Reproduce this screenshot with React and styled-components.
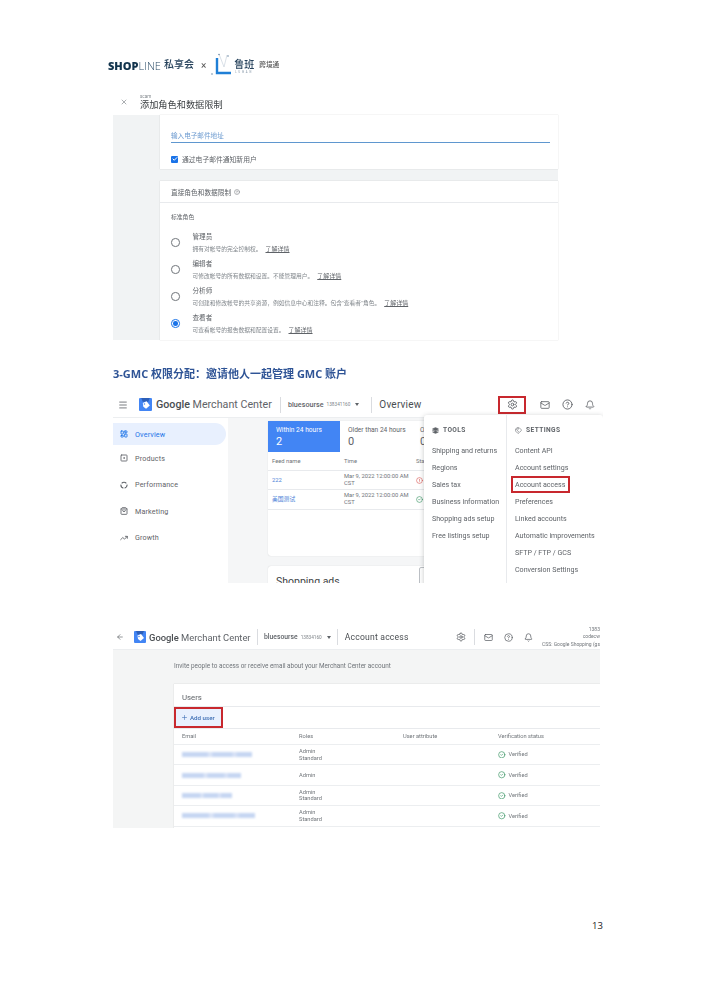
import React from 'react';
import styled, { createGlobalStyle } from 'styled-components';
import {
  Menu, ArrowLeft, Settings, Mail, CircleHelp, Bell, X, Check,
  LayoutDashboard, SquareDot, ShoppingBag, TrendingUp,
  Tags, Layers, CircleCheck, CircleAlert, Plus
} from 'lucide-react';

const GlobalStyle = createGlobalStyle`
  html, body {
    margin: 0;
    padding: 0;
    background: #fff;
  }
  * { box-sizing: border-box; }
`;

const CJK = `Roboto, "Noto Sans CJK SC", sans-serif`;

const Page = styled.div`
  width: 710px;
  height: 1004px;
  overflow: hidden;
  padding-top: 52px;
  font-family: ${CJK};
  color: #3c4043;
`;

const Soft = styled.div`
  filter: blur(0.4px);
`;

/* brand row */
const BrandRow = styled(Soft)`
  height: 26px;
  margin-left: 108px;
  display: flex;
  align-items: center;
  color: #1d3a54;
`;
const Shop = styled.span`
  font-size: 11px;
  font-weight: 800;
  font-family: "Open Sans", sans-serif;
  color: #12344d;
`;
const Line = styled.span`
  font-size: 11px;
  font-weight: 300;
  color: #2c4d68;
  font-family: "Open Sans", sans-serif;
`;
const BrandCn = styled.span`
  margin-left: ${p => p.$ml || 3}px;
  font-size: ${p => p.$size || 10}px;
  line-height: ${p => p.$size || 10}px;
  font-weight: ${p => p.$weight || 500};
  color: ${p => p.$color || '#24405a'};
  white-space: nowrap;
`;
const Times = styled.span`
  margin-left: 7px;
  font-size: 10px;
  color: #555;
`;
const LubanLogo = styled.svg`
  width: 22px;
  height: 24px;
  margin-left: 5px;
  flex: none;
`;
const LubanName = styled.div`
  margin-left: 1px;
  display: flex;
  flex-direction: column;
  align-items: center;
  gap: 1px;
  padding-top: 3px;
`;
const LubanSub = styled.span`
  font-size: 2.6px;
  line-height: 3px;
  letter-spacing: 2px;
  color: #7b8ea0;
`;

/* first screenshot */
const RoleShot = styled(Soft)`
  margin: 10px 0 0 113px;
  width: 445px;
  height: 252px;
`;
const RoleHead = styled.div`
  height: 27px;
  display: flex;
  align-items: center;
  padding-left: 7px;
`;
const HeadTitles = styled.div`
  margin-left: 12px;
  display: flex;
  flex-direction: column;
  padding-top: 1px;
`;
const Scam = styled.span`
  font-size: 4.5px;
  line-height: 5px;
  color: #80868b;
`;
const RoleTitle = styled.span`
  font-size: 9.2px;
  line-height: 12px;
  color: #3c4043;
`;
const RoleBody = styled.div`
  height: 225px;
  padding-left: 47px;
  background: #f1f3f4;
  display: flex;
  flex-direction: column;
  gap: 12px;
`;
const Card = styled.div`
  background: #fff;
  box-shadow: 0 0 1px rgba(60, 64, 67, 0.25);
`;
const InviteCard = styled(Card)`
  height: 54px;
  padding: 15px 8px 0 11px;
`;
const EmailField = styled.div`
  height: 13px;
  font-size: 6.6px;
  line-height: 12px;
  color: #6d9bd0;
  border-bottom: 1px solid #5f97cf;
`;
const CheckRow = styled.div`
  margin-top: 11px;
  display: flex;
  align-items: center;
  gap: 4px;
  font-size: 6.8px;
  color: #5f6368;
`;
const CheckBox = styled.span`
  width: 7px;
  height: 7px;
  border-radius: 1px;
  background: #1a73e8;
  color: #fff;
  display: flex;
  align-items: center;
  justify-content: center;
`;
const RolesCard = styled(Card)`
  flex: 1;
`;
const RolesHead = styled.div`
  height: 22px;
  padding-left: 11px;
  display: flex;
  align-items: center;
  gap: 3px;
  font-size: 6.7px;
  color: #5f6368;
  border-bottom: 1px solid #e8eaed;
`;
const StdLabel = styled.div`
  padding: 10px 0 0 11px;
  height: 26px;
  font-size: 5.8px;
  line-height: 8px;
  color: #5f6368;
`;
const RoleRow = styled.div`
  height: 27px;
  padding-left: 11px;
  display: flex;
  align-items: center;
  gap: 13px;
`;
const Radio = styled.span`
  width: 8.5px;
  height: 8.5px;
  border-radius: 50%;
  border: 1px solid ${p => (p.$on ? '#1a73e8' : '#70757a')};
  display: flex;
  align-items: center;
  justify-content: center;
  flex: none;
  &::after {
    content: '';
    display: ${p => (p.$on ? 'block' : 'none')};
    width: 4.5px;
    height: 4.5px;
    border-radius: 50%;
    background: #1a73e8;
  }
`;
const RoleText = styled.div`
  display: flex;
  flex-direction: column;
  gap: 4px;
`;
const RoleName = styled.span`
  font-size: 6.6px;
  line-height: 8px;
  color: #5f6368;
`;
const RoleDesc = styled.span`
  font-size: 5.75px;
  line-height: 7px;
  color: #80868b;
  white-space: nowrap;
`;
const LearnMore = styled.span`
  margin-left: 4px;
  font-size: 6px;
  text-decoration: underline;
  color: #5f6368;
`;

const Heading = styled.h2`
  margin: 27px 0 0 113px;
  height: 14px;
  font-size: 11px;
  line-height: 14px;
  font-weight: 700;
  color: #2f5496;
  font-family: "Open Sans", "Noto Sans CJK SC", sans-serif;
  white-space: nowrap;
  filter: blur(0.3px);
`;

/* merchant center shared */
const TopBar = styled.div`
  height: ${p => p.$h}px;
  display: flex;
  align-items: center;
  background: #fff;
  border-bottom: 1px solid #eceef0;
  color: #5f6368;
`;
const GmcLogo = styled.svg`
  width: ${p => p.$size}px;
  height: ${p => p.$size}px;
  margin-left: ${p => p.$ml}px;
  flex: none;
`;
const GmcName = styled.span`
  margin-left: ${p => p.$ml}px;
  width: ${p => p.$w}px;
  font-size: ${p => p.$size}px;
  color: #5f6368;
  white-space: nowrap;
  flex: none;
  b {
    font-weight: 500;
    color: #4a4e52;
  }
`;
const VLine = styled.span`
  width: 1px;
  height: 16px;
  background: #dadce0;
  margin-left: ${p => p.$ml}px;
  flex: none;
`;
const Account = styled.span`
  margin-left: ${p => p.$ml}px;
  font-size: ${p => p.$size}px;
  font-weight: 500;
  color: #5f6368;
  white-space: nowrap;
  display: flex;
  align-items: center;
  gap: 3px;
  flex: none;
  small {
    font-size: 4.7px;
    font-weight: 400;
    color: #80868b;
  }
`;
const Caret = styled.span`
  width: 0;
  height: 0;
  margin-left: 2px;
  border-left: 2.5px solid transparent;
  border-right: 2.5px solid transparent;
  border-top: 3px solid #5f6368;
`;
const PageTitle = styled.span`
  margin-left: ${p => p.$ml}px;
  font-size: ${p => p.$size}px;
  letter-spacing: 0.2px;
  color: #4a4e52;
  white-space: nowrap;
  flex: none;
`;
const IconGroup = styled.div`
  margin-left: auto;
  display: flex;
  align-items: center;
  color: #5f6368;
`;
const GearBox = styled.span`
  width: 28px;
  height: 18px;
  border: 2px solid #c8282e;
  display: flex;
  align-items: center;
  justify-content: center;
  margin-right: 14px;
`;
const BarIcon = styled.span`
  display: flex;
  margin-left: ${p => p.$ml || 0}px;
`;

/* overview screenshot */
const OverviewShot = styled(Soft)`
  position: relative;
  margin: 11px 0 0 113px;
  width: 490px;
  height: 191px;
  overflow: hidden;
`;
const OverviewBody = styled.div`
  height: 165px;
  display: flex;
`;
const SideNav = styled.nav`
  width: 115px;
  padding-top: 5px;
  flex: none;
  background: #fff;
`;
const NavItem = styled.div`
  height: ${p => (p.$on ? 22 : 26.5)}px;
  width: 113px;
  display: flex;
  align-items: center;
  gap: 7px;
  padding-left: 7px;
  font-size: 7.2px;
  letter-spacing: 0.15px;
  color: ${p => (p.$on ? '#1a73e8' : '#5f6368')};
  background: ${p => (p.$on ? '#e8f0fe' : 'transparent')};
  border-radius: ${p => (p.$on ? '0 11px 11px 0' : '0')};
`;
const PerfIcon = styled.svg`
  width: 8px;
  height: 8px;
  flex: none;
`;
const MainArea = styled.div`
  flex: 1;
  background: #f5f6f7;
  padding: 3px 0 0 40px;
  display: flex;
  flex-direction: column;
  gap: 10px;
`;
const FeedCard = styled(Card)`
  height: 135px;
  flex: none;
  border-radius: 3px;
`;
const Tabs = styled.div`
  height: 31px;
  display: flex;
`;
const Tab = styled.div`
  width: ${p => p.$w}px;
  padding: 5px 0 0 ${p => p.$pl}px;
  background: ${p => (p.$on ? '#4285f4' : '#fff')};
  color: ${p => (p.$on ? '#fff' : '#5f6368')};
  font-size: 6.6px;
  line-height: 8px;
  white-space: nowrap;
  strong {
    display: block;
    margin-top: 1px;
    font-size: 11px;
    line-height: 14px;
    font-weight: 400;
  }
`;
const FeedRow = styled.div`
  height: ${p => p.$h}px;
  display: grid;
  grid-template-columns: 72px 72px 1fr;
  align-items: center;
  padding-left: 4px;
  font-size: 5.8px;
  line-height: 7px;
  color: #70757a;
  border-bottom: 1px solid #e8eaed;
`;
const FeedLink = styled.span`
  color: #4a7fd8;
`;
const AdsCard = styled(Card)`
  height: 40px;
  padding: 9px 0 0 8px;
  font-size: 10.5px;
  color: #3c4043;
  border-radius: 3px;
  display: flex;
`;
const AdsButton = styled.span`
  margin: -8px 0 0 79px;
  width: 30px;
  height: 30px;
  border: 1px solid #bdc1c6;
  border-radius: 2px;
`;

const Dropdown = styled.div`
  position: absolute;
  left: 311px;
  top: 23px;
  width: 179px;
  height: 175px;
  background: #fff;
  border-radius: 3px;
  box-shadow: 0 1px 5px rgba(60, 64, 67, 0.3);
  display: flex;
`;
const MenuCol = styled.div`
  width: ${p => p.$w}px;
  flex: none;
  padding: 6.5px 0 0 ${p => p.$pl}px;
  border-right: ${p => (p.$rule ? '1px solid #e8eaed' : 'none')};
`;
const MenuHead = styled.div`
  height: 17px;
  margin-bottom: 3px;
  display: flex;
  align-items: center;
  gap: 4px;
  font-size: 6.6px;
  font-weight: 700;
  letter-spacing: 0.4px;
  color: #5f6368;
`;
const MenuLink = styled.div`
  height: 17px;
  display: flex;
  align-items: center;
  font-size: 7.1px;
  color: #5f6368;
  white-space: nowrap;
`;
const MarkedLink = styled(MenuLink)`
  margin-left: -4px;
  width: 59px;
  border: 2px solid #c8282e;
  padding-left: 2px;
`;

/* account access screenshot */
const AccessShot = styled(Soft)`
  margin: 42px 0 0 113px;
  width: 487px;
  height: 203px;
  overflow: hidden;
`;
const UserInfo = styled.div`
  margin-left: 3px;
  width: 64px;
  flex: none;
  font-size: 5px;
  line-height: 7.5px;
  color: #70757a;
  white-space: nowrap;
  display: flex;
  flex-direction: column;
  align-items: flex-end;
`;
const AccessBody = styled.div`
  height: 178px;
  background: #f4f5f5;
  padding-left: 61px;
`;
const InviteText = styled.div`
  height: 34px;
  padding-top: 12px;
  font-size: 6.4px;
  line-height: 8px;
  color: #70757a;
  white-space: nowrap;
`;
const UsersCard = styled(Card)`
  height: 144px;
`;
const UsersHead = styled.div`
  height: 23px;
  padding: 4px 0 0 8px;
  display: flex;
  align-items: center;
  font-size: 7.8px;
  color: #5f6368;
  border-bottom: 1px solid #e8eaed;
`;
const AddRow = styled.div`
  height: 22px;
  border-bottom: 1px solid #e8eaed;
  display: flex;
`;
const AddButton = styled.div`
  width: 49px;
  height: 21px;
  border: 2px solid #c8282e;
  background: #e8f0fe;
  color: #3f6fb5;
  font-size: 6.2px;
  font-weight: 500;
  display: flex;
  align-items: center;
  gap: 2px;
  padding-left: 5px;
`;
const UserRow = styled.div`
  height: ${p => p.$h}px;
  display: grid;
  grid-template-columns: 117px 104px 95px 1fr;
  align-items: center;
  padding-left: 8px;
  font-size: 5.7px;
  line-height: 6.5px;
  color: #70757a;
  border-bottom: 1px solid #eceef0;
`;
const BlurMail = styled.span`
  display: block;
  height: 5px;
  background: linear-gradient(90deg, #c6d6f2 0 35%, #e0e8f8 40%, #c6d6f2 45% 70%, #dbe4f7 75%, #c6d6f2 80%);
  filter: blur(1.3px);
`;
const Verified = styled.span`
  display: flex;
  align-items: center;
  gap: 3px;
  color: #70757a;
  svg { color: #2f8f5b; }
`;

const PageNo = styled.div`
  margin: 92px 0 0 592px;
  font-size: 9.5px;
  line-height: 12px;
  color: #222;
  font-family: "Open Sans", sans-serif;
`;

const GmcIcon = ({ size, ml }) => (
  <GmcLogo $size={size} $ml={ml} viewBox="0 0 24 24">
    <rect width="24" height="24" rx="2" fill="#4285f4" />
    <path d="M4 0h16l-3 7H7z" fill="#2d5fb8" />
    <path d="M7 9l7-3 6 8-7 6-5-4z" fill="#fff" />
    <circle cx="10" cy="11" r="1.5" fill="#4285f4" />
  </GmcLogo>
);

const PerformanceIcon = () => (
  <PerfIcon viewBox="0 0 24 24" fill="none" stroke="currentColor" strokeWidth="3.4">
    <path d="M5 7a9.5 9.5 0 0 1 14 0" />
    <path d="M21 11a9.5 9.5 0 0 1-7 10.5" />
    <path d="M10 21.5A9.5 9.5 0 0 1 3 11" />
  </PerfIcon>
);

const roles = [
  { name: '管理员', desc: '拥有对帐号的完全控制权。' },
  { name: '编辑者', desc: '可修改帐号的所有数据和设置。不能管理用户。' },
  { name: '分析师', desc: '可创建和修改帐号的共享资源，例如信息中心和注释。包含"查看者"角色。' },
  { name: '查看者', desc: '可查看帐号的报告数据和配置设置。', on: true }
];

const navItems = [
  { label: 'Overview', Icon: LayoutDashboard, on: true },
  { label: 'Products', Icon: SquareDot },
  { label: 'Performance', Icon: PerformanceIcon },
  { label: 'Marketing', Icon: ShoppingBag },
  { label: 'Growth', Icon: TrendingUp }
];

const tools = ['Shipping and returns', 'Regions', 'Sales tax', 'Business information', 'Shopping ads setup', 'Free listings setup'];

const users = [
  { width: 70, roles: ['Admin', 'Standard'] },
  { width: 59, roles: ['Admin'] },
  { width: 50, roles: ['Admin', 'Standard'] },
  { width: 73, roles: ['Admin', 'Standard'] }
];

const App = () => (
  <>
    <GlobalStyle />
    <Page>
      <BrandRow>
        <Shop>SHOP</Shop>
        <Line>LINE</Line>
        <BrandCn $ml={3}>私享会</BrandCn>
        <Times>×</Times>
        <LubanLogo viewBox="0 0 22 24">
          <path d="M6 5v15h14" fill="none" stroke="#1f7fd6" strokeWidth="2.4" />
          <path d="M8 1l5 13M16 2l-3 12" stroke="#c9d3dc" strokeWidth="0.7" />
          <circle cx="8" cy="1.5" r="0.8" fill="#6c8aa5" />
          <circle cx="17" cy="3" r="0.8" fill="#6c8aa5" />
          <circle cx="1" cy="21" r="0.8" fill="#6c8aa5" />
        </LubanLogo>
        <LubanName>
          <BrandCn $ml={0.1}>鲁班</BrandCn>
          <LubanSub>LUBAN</LubanSub>
        </LubanName>
        <BrandCn $ml={5} $size={6.6} $color="#555">跨境通</BrandCn>
      </BrandRow>

      <RoleShot>
        <RoleHead>
          <X size={8} color="#80868b" />
          <HeadTitles>
            <Scam>scam</Scam>
            <RoleTitle>添加角色和数据限制</RoleTitle>
          </HeadTitles>
        </RoleHead>
        <RoleBody>
          <InviteCard>
            <EmailField>输入电子邮件地址</EmailField>
            <CheckRow>
              <CheckBox><Check size={6} strokeWidth={4} /></CheckBox>
              通过电子邮件通知新用户
            </CheckRow>
          </InviteCard>
          <RolesCard>
            <RolesHead>
              直接角色和数据限制
              <CircleHelp size={6} color="#70757a" />
            </RolesHead>
            <StdLabel>标准角色</StdLabel>
            {roles.map(role => (
              <RoleRow key={role.name}>
                <Radio $on={role.on} />
                <RoleText>
                  <RoleName>{role.name}</RoleName>
                  <RoleDesc>
                    {role.desc}
                    <LearnMore>了解详情</LearnMore>
                  </RoleDesc>
                </RoleText>
              </RoleRow>
            ))}
          </RolesCard>
        </RoleBody>
      </RoleShot>

      <Heading>3-GMC 权限分配：邀请他人一起管理 GMC 账户</Heading>

      <OverviewShot>
        <TopBar $h={26}>
          <BarIcon $ml={5}><Menu size={10} /></BarIcon>
          <GmcIcon size={13} ml={11} />
          <GmcName $ml={4} $w={120} $size={10.7}><b>Google</b> Merchant Center</GmcName>
          <VLine $ml={4} />
          <Account $ml={7} $size={7.2}>
            bluesourse <small>138341160</small>
            <Caret />
          </Account>
          <VLine $ml={12} />
          <PageTitle $ml={7} $size={10}>Overview</PageTitle>
          <IconGroup>
            <GearBox><Settings size={11} /></GearBox>
            <BarIcon><Mail size={10} /></BarIcon>
            <BarIcon $ml={12}><CircleHelp size={11} /></BarIcon>
            <BarIcon $ml={12}><Bell size={10} /></BarIcon>
            <BarIcon $ml={8} />
          </IconGroup>
        </TopBar>
        <OverviewBody>
          <SideNav>
            {navItems.map(({ label, Icon, on }) => (
              <NavItem key={label} $on={on}>
                <Icon size={8} strokeWidth={2.6} />
                {label}
              </NavItem>
            ))}
          </SideNav>
          <MainArea>
            <FeedCard>
              <Tabs>
                <Tab $on $w={72} $pl={8}>Within 24 hours<strong>2</strong></Tab>
                <Tab $w={72} $pl={8}>Older than 24 hours<strong>0</strong></Tab>
                <Tab $w={30} $pl={8}>Older<strong>0</strong></Tab>
              </Tabs>
              <FeedRow $h={19}>
                <span>Feed name</span><span>Time</span><span>Status</span>
              </FeedRow>
              <FeedRow $h={19}>
                <FeedLink>222</FeedLink>
                <span>Mar 9, 2022 12:00:00 AM<br />CST</span>
                <CircleAlert size={7} color="#d9534f" />
              </FeedRow>
              <FeedRow $h={19.5}>
                <FeedLink>美国测试</FeedLink>
                <span>Mar 9, 2022 12:00:00 AM<br />CST</span>
                <CircleCheck size={7} color="#2f8f5b" />
              </FeedRow>
            </FeedCard>
            <AdsCard>
              Shopping ads
              <AdsButton />
            </AdsCard>
          </MainArea>
        </OverviewBody>
        <Dropdown>
          <MenuCol $w={83} $pl={8} $rule>
            <MenuHead><Layers size={7} fill="currentColor" />TOOLS</MenuHead>
            {tools.map(item => <MenuLink key={item}>{item}</MenuLink>)}
          </MenuCol>
          <MenuCol $w={96} $pl={8}>
            <MenuHead><Tags size={7} />SETTINGS</MenuHead>
            <MenuLink>Content API</MenuLink>
            <MenuLink>Account settings</MenuLink>
            <MarkedLink>Account access</MarkedLink>
            <MenuLink>Preferences</MenuLink>
            <MenuLink>Linked accounts</MenuLink>
            <MenuLink>Automatic improvements</MenuLink>
            <MenuLink>SFTP / FTP / GCS</MenuLink>
            <MenuLink>Conversion Settings</MenuLink>
          </MenuCol>
        </Dropdown>
      </OverviewShot>

      <AccessShot>
        <TopBar $h={25}>
          <BarIcon $ml={3}><ArrowLeft size={8} /></BarIcon>
          <GmcIcon size={12} ml={10} />
          <GmcName $ml={3} $w={104} $size={9.4}><b>Google</b> Merchant Center</GmcName>
          <VLine $ml={4} />
          <Account $ml={6} $size={6.8}>
            bluesourse <small>13834160</small>
            <Caret />
          </Account>
          <VLine $ml={6} />
          <PageTitle $ml={7} $size={8.6}>Account access</PageTitle>
          <IconGroup>
            <BarIcon><Settings size={10} /></BarIcon>
            <VLine $ml={8} />
            <BarIcon $ml={9}><Mail size={9} /></BarIcon>
            <BarIcon $ml={11}><CircleHelp size={9} /></BarIcon>
            <BarIcon $ml={11}><Bell size={9} /></BarIcon>
            <UserInfo>
              <span>1383</span>
              <span>codecw</span>
              <span>CSS: Google Shopping (gs</span>
            </UserInfo>
          </IconGroup>
        </TopBar>
        <AccessBody>
          <InviteText>Invite people to access or receive email about your Merchant Center account</InviteText>
          <UsersCard>
            <UsersHead>Users</UsersHead>
            <AddRow>
              <AddButton><Plus size={7} />Add user</AddButton>
            </AddRow>
            <UserRow $h={16}>
              <span>Email</span><span>Roles</span><span>User attribute</span><span>Verification status</span>
            </UserRow>
            {users.map((user, i) => (
              <UserRow key={i} $h={20.4}>
                <BlurMail style={{ width: user.width }} />
                <span>{user.roles.map(r => <div key={r}>{r}</div>)}</span>
                <span />
                <Verified><CircleCheck size={7.5} />Verified</Verified>
              </UserRow>
            ))}
          </UsersCard>
        </AccessBody>
      </AccessShot>

      <PageNo>13</PageNo>
    </Page>
  </>
);

export default App;
